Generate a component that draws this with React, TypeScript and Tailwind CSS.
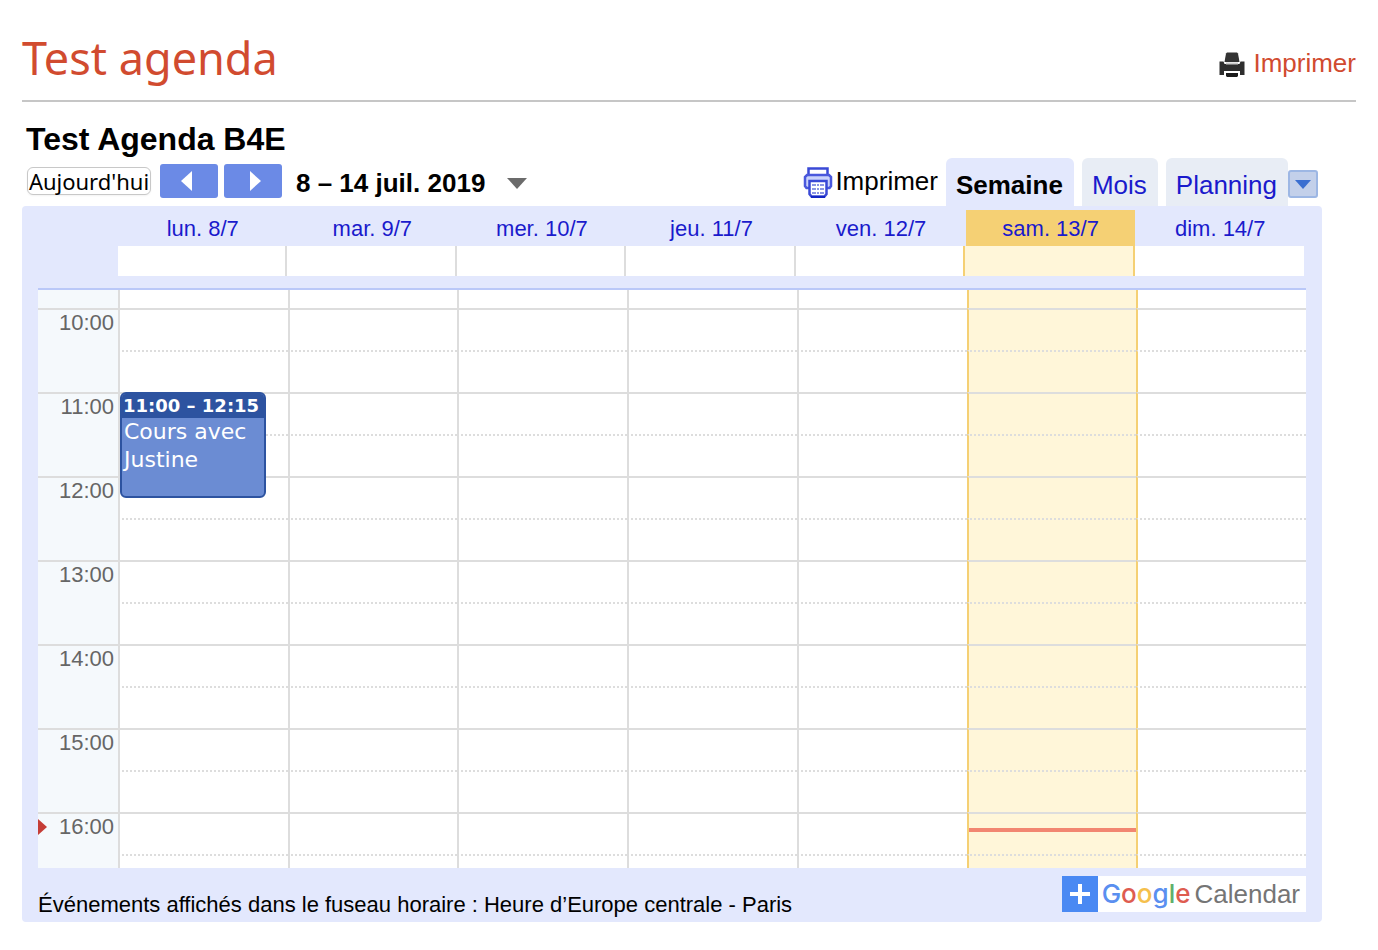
import React from 'react';

interface Day {
  label: string;
  today?: boolean;
}

const DAYS: Day[] = [
  { label: 'lun. 8/7' },
  { label: 'mar. 9/7' },
  { label: 'mer. 10/7' },
  { label: 'jeu. 11/7' },
  { label: 'ven. 12/7' },
  { label: 'sam. 13/7', today: true },
  { label: 'dim. 14/7' },
];

const HOURS = [10, 11, 12, 13, 14, 15, 16];

const EVENTS = [
  { day: 0, hour: 11, time: '11:00 – 12:15', title: 'Cours avec Justine' },
];

// Current time marker
const NOW = { day: 5, hour: 16 };

const cellColors = (index: number) => {
  if (DAYS[index].today) return 'border-l-[#f5d074] bg-[#fff6d9]';
  if (index > 0 && DAYS[index - 1].today) return 'border-l-[#f5d074] bg-white';
  return 'border-l-[#dddddd] bg-white';
};

const PrinterSolid = () => (
  <svg width="26" height="26" viewBox="0 0 26 26" aria-hidden="true">
    <path d="M8 .5h10l1 1 1.500 8.500h-15L7 1.500z" fill="#333" />
    <path d="M.5 9.500h4l1 2.500h15l1-2.500h4V23H21v-4H5v4H.5z" fill="#2e2e2e" />
    <path d="M7 11.500h12" stroke="#ccc" strokeWidth="2" />
    <path d="M7 21h12v3l-1 1H8l-1-1z" fill="#1c1c1c" />
  </svg>
);

const PrinterOutline = () => (
  <svg width="30" height="32" viewBox="0 0 30 32" fill="none" aria-hidden="true">
    <path d="M5.500 9V2.500h19V9" fill="#fff" stroke="#3a49d6" strokeWidth="2.500" />
    <path d="M6 22H3.500L2 20V11l2-2h22l2 2v9l-1.500 2H24" fill="#c9d2fb" stroke="#4a58dc" strokeWidth="2.500" />
    <path d="M6.500 15h17v13l-2 2.500h-13l-2-2.500z" fill="#fff" stroke="#3a49d6" strokeWidth="2.500" />
    <path d="M9 19h12M9 23h12M9 27h12" stroke="#8b96e4" strokeWidth="2" strokeDasharray="4 1 2 1" />
    <path d="M8 31h14" stroke="#1426c4" strokeWidth="2" />
  </svg>
);

const Triangle = ({ points, className, width, height }: { points: string; className: string; width: number; height: number }) => (
  <svg width={width} height={height} className={className} aria-hidden="true">
    <polygon points={points} />
  </svg>
);

const PageHeader = () => (
  <header className="flex h-[102px] items-center justify-between border-b-2 border-[#c6c6c6] pt-6 text-[#d14b2f]">
    <h1 className="pb-2 font-['Noto_Sans',sans-serif] text-[45px] leading-[60px]">Test agenda</h1>
    <a href="#imprimer" className="flex items-center gap-2 pt-0.5 text-[26px] leading-8">
      <span className="pt-1"><PrinterSolid /></span>
      Imprimer
    </a>
  </header>
);

const Toolbar = () => (
  <div className="flex h-12 items-start justify-between pr-1 pl-[5px]">
    <div className="flex items-start pt-1.5">
      <button className="mt-[3px] mr-[9px] h-7 w-[124px] rounded-md border border-[#c8c8c8] bg-white text-center font-['Noto_Sans',sans-serif] text-[22px] leading-[26px] whitespace-nowrap shadow-xs">
        Aujourd'hui
      </button>
      <button aria-label="Précédent" className="mr-1.5 flex h-[34px] w-[58px] items-center justify-center rounded-[3px] bg-[#6b8ae6] pr-1">
        <Triangle width={12} height={20} points="11,0 11,20 0,10" className="fill-white" />
      </button>
      <button aria-label="Suivant" className="mr-3.5 flex h-[34px] w-[58px] items-center justify-center rounded-[3px] bg-[#6b8ae6] pl-1">
        <Triangle width={12} height={20} points="1,0 1,20 12,10" className="fill-white" />
      </button>
      <button className="flex items-center gap-[22px] pt-[3px] text-[26px] leading-8 font-bold">
        8 – 14 juil. 2019
        <Triangle width={20} height={11} points="0,0 20,0 10,11" className="fill-[#6b6b6b]" />
      </button>
    </div>

    <div className="flex items-start text-[26px] leading-8 text-[#1a1acc]">
      <button className="mr-2 flex items-center gap-0.5 pt-1.5 text-black">
        <span className="pt-0.5"><PrinterOutline /></span>
        Imprimer
      </button>
      <nav className="flex gap-2">
        <a href="#semaine" className="h-12 rounded-t-md bg-[#e3e8fd] pt-[11px] pr-[11px] pl-2.5 font-bold text-black">Semaine</a>
        <a href="#mois" className="h-12 rounded-t-md bg-[#e8edf5] pt-[11px] pr-[11px] pl-2.5">Mois</a>
        <a href="#planning" className="h-12 rounded-t-md bg-[#e8edf5] pt-[11px] pr-[11px] pl-2.5">Planning</a>
      </nav>
      <button aria-label="Options" className="mt-3 flex h-7 w-[30px] items-center justify-center rounded-[3px] border-2 border-[#9db7e4] bg-[#c3d0ea]">
        <Triangle width={16} height={9} points="0,0 16,0 8,9" className="fill-[#3b6fd0]" />
      </button>
    </div>
  </div>
);

const DayHeader = () => (
  <div className="ml-20">
    <div className="mr-px grid h-9 grid-cols-7 text-center text-[22px] leading-[38px] text-[#1a1acc]">
      {DAYS.map(day => (
        <a key={day.label} href="#jour" className={day.today ? 'h-9 bg-[#f5d074]' : 'h-9'}>
          {day.label}
        </a>
      ))}
    </div>
    {/* All-day events */}
    <div className="mr-0.5 grid h-[30px] grid-cols-7 bg-white">
      {DAYS.map((day, index) => (
        <div
          key={day.label}
          className={`${index < 6 ? 'border-r-2' : ''} ${day.today ? 'bg-[#fff6d9]' : ''} ${
            day.today || DAYS[index + 1]?.today ? 'border-[#f5d074]' : 'border-[#dddddd]'
          }`}
        />
      ))}
    </div>
  </div>
);

const EventCard = ({ time, title }: { time: string; title: string }) => (
  <div className="absolute -top-0.5 right-[22px] left-0 z-10 h-[106px] overflow-hidden rounded-md border-2 border-[#2d53a0] bg-[#6b8cd3] font-['DejaVu_Sans',sans-serif] text-white">
    <div className="bg-[#2d53a0] pl-px text-[18px] leading-6 font-bold whitespace-nowrap">{time}</div>
    <div className="px-0.5 text-[22px] leading-7">{title}</div>
  </div>
);

const TimeGrid = () => (
  <table className="w-full table-fixed border-separate border-spacing-0 border-t-2 border-[#bac8f8]">
    <colgroup>
      <col className="w-20" />
      {DAYS.map(day => <col key={day.label} />)}
    </colgroup>
    <tbody>
      <tr className="h-[18px]">
        <td className="bg-[#f5f9fc] p-0" />
        {DAYS.map((day, index) => (
          <td key={day.label} className={`border-l-2 p-0 ${cellColors(index)}`} />
        ))}
      </tr>
      {HOURS.map(hour => (
        <React.Fragment key={hour}>
          <tr className="h-[42px]">
            <th
              scope="row"
              rowSpan={2}
              className="relative border-t-2 border-[#dddddd] bg-[#f5f9fc] p-0 pr-1 text-right align-top text-[22px] leading-[26px] font-normal text-[#666666]"
            >
              {hour === NOW.hour && (
                <Triangle width={9} height={16} points="0,0 9,8 0,16" className="absolute top-[5px] left-0 fill-[#c53d36]" />
              )}
              {hour}:00
            </th>
            {DAYS.map((day, index) => (
              <td key={day.label} className={`relative border-t-2 border-l-2 border-t-[#dddddd] p-0 ${cellColors(index)}`}>
                {EVENTS.filter(event => event.day === index && event.hour === hour).map(event => (
                  <EventCard key={event.title} time={event.time} title={event.title} />
                ))}
                {hour === NOW.hour && index === NOW.day && (
                  <div className="absolute inset-x-0 top-3.5 h-1 bg-[#f28671]" />
                )}
              </td>
            ))}
          </tr>
          <tr className={hour === 16 ? 'h-3.5' : 'h-[42px]'}>
            {DAYS.map((day, index) => (
              <td
                key={day.label}
                className={`border-t-2 border-l-2 border-t-[#dddddd] p-0 [border-top-style:dotted] ${cellColors(index)}`}
              />
            ))}
          </tr>
        </React.Fragment>
      ))}
    </tbody>
  </table>
);

const Footer = () => (
  <footer className="flex items-start justify-between pt-2">
    <p className="pt-4 text-[22px] leading-[26px]">
      Événements affichés dans le fuseau horaire : Heure d’Europe centrale - Paris
    </p>
    <a href="#google-calendar" className="flex h-9 items-center bg-white pr-1.5 text-[26px] leading-[38px]">
      <span className="mr-1 flex size-9 items-center justify-center bg-[#4a89f3]">
        <svg width="20" height="20" viewBox="0 0 20 20" stroke="#fff" strokeWidth="4" aria-hidden="true">
          <path d="M10 0v20M0 10h20" />
        </svg>
      </span>
      <span className="mr-1 font-['Inter',sans-serif] text-[26px] font-medium">
        <span className="text-[#5a8ff0]">G</span>
        <span className="text-[#de5c50]">o</span>
        <span className="text-[#f5c04c]">o</span>
        <span className="text-[#5a8ff0]">g</span>
        <span className="text-[#5fb06c]">l</span>
        <span className="text-[#de5c50]">e</span>
      </span>
      <span className="text-[#757575]">Calendar</span>
    </a>
  </footer>
);

const App: React.FC = () => {
  return (
    <div className="min-h-screen bg-white px-[22px] font-['Liberation_Sans',Arial,sans-serif] text-black">
      <PageHeader />
      <main className="mr-[34px] pt-[18px]">
        <h2 className="pl-1 text-[32px] leading-[38px] font-bold">Test Agenda B4E</h2>
        <Toolbar />
        <section className="rounded-[4px] bg-[#e3e8fd] px-4 pt-1 pb-1">
          <DayHeader />
          <div className="mt-3">
            <TimeGrid />
          </div>
          <Footer />
        </section>
      </main>
    </div>
  );
};

export default App;
